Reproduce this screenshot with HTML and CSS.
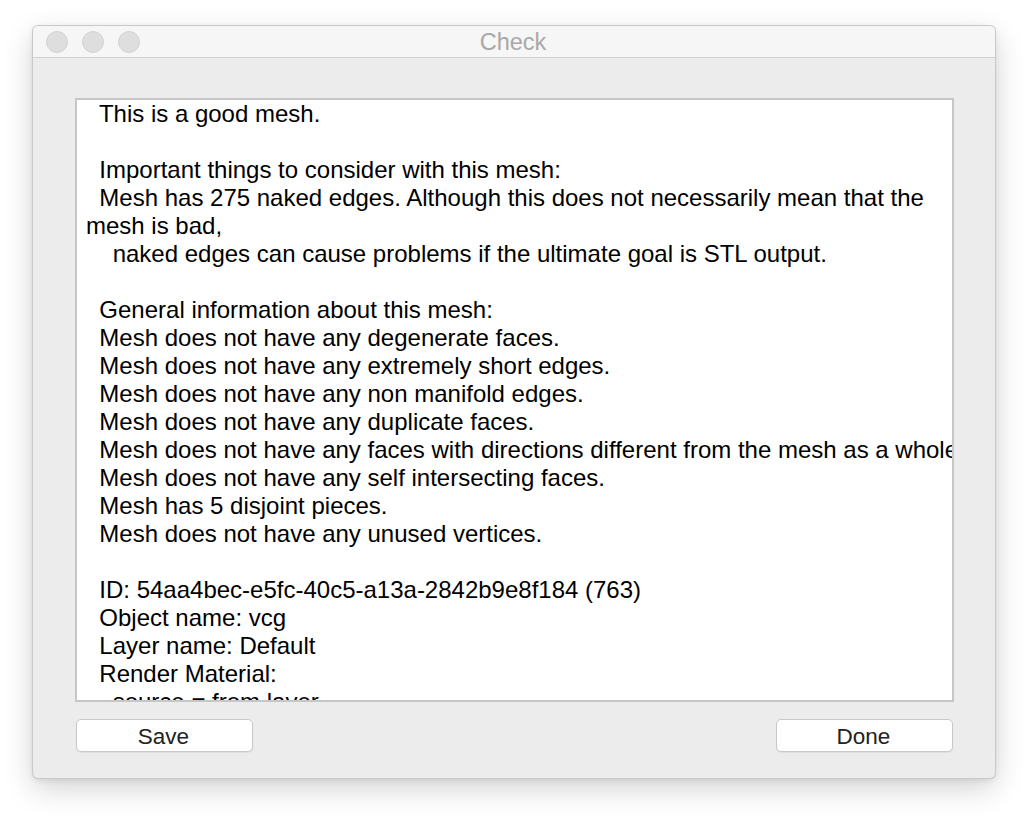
FILE: index.html
```html
<!DOCTYPE html>
<html>
<head>
<meta charset="utf-8">
<title>Check</title>
<link rel="stylesheet" href="styles.css">
</head>
<body>
<div class="stage">
  <div class="window">
    <div class="titlebar">
      <div class="lights">
        <span class="light"></span>
        <span class="light"></span>
        <span class="light"></span>
      </div>
      <div class="title">Check</div>
    </div>
    <div class="content">
      <div class="textbox">
<div class="text">  This is a good mesh.

  Important things to consider with this mesh:
  Mesh has 275 naked edges. Although this does not necessarily mean that the
mesh is bad,
    naked edges can cause problems if the ultimate goal is STL output.

  General information about this mesh:
  Mesh does not have any degenerate faces.
  Mesh does not have any extremely short edges.
  Mesh does not have any non manifold edges.
  Mesh does not have any duplicate faces.
  Mesh does not have any faces with directions different from the mesh as a whole.
  Mesh does not have any self intersecting faces.
  Mesh has 5 disjoint pieces.
  Mesh does not have any unused vertices.

  ID: 54aa4bec-e5fc-40c5-a13a-2842b9e8f184 (763)
  Object name: vcg
  Layer name: Default
  Render Material:
    source = from layer
    index = -1
</div>
      </div>
      <div class="buttons">
        <button class="btn">Save</button>
        <button class="btn">Done</button>
      </div>
    </div>
  </div>
</div>
</body>
</html>
```
FILE: styles.css
```css
html, body {
  margin: 0;
  padding: 0;
  background: #ffffff;
}
.stage {
  padding: 26px 0 42px 33px;
}
.window {
  width: 962px;
  height: 752px;
  box-sizing: border-box;
  background: #ececec;
  border-radius: 5px;
  box-shadow: 0 0 0 1px #c9c9c9, 0 10px 30px rgba(0,0,0,0.18), 0 2px 6px rgba(0,0,0,0.10);
  display: flex;
  flex-direction: column;
  overflow: hidden;
  font-family: "Liberation Sans", Arial, sans-serif;
}
.titlebar {
  height: 31px;
  flex: none;
  background: #f6f6f6;
  border-bottom: 1px solid #d1d1d1;
  display: flex;
  align-items: center;
  position: relative;
}
.lights {
  display: flex;
  gap: 14px;
  padding-left: 13px;
  padding-top: 1px;
}
.light {
  width: 20px;
  height: 20px;
  border-radius: 50%;
  background: #dedede;
  border: 1px solid #d2d2d2;
}
.title {
  position: absolute;
  left: 0;
  right: 0;
  top: 0;
  bottom: 0;
  display: flex;
  align-items: center;
  justify-content: center;
  color: #a8a8a8;
  font-size: 23.5px;
  padding-top: 1px;
  padding-right: 2px;
}
.content {
  flex: 1;
  display: flex;
  flex-direction: column;
  padding: 40px 41px 0 42px;
}
.textbox {
  width: 879px;
  height: 604px;
  box-sizing: border-box;
  background: #ffffff;
  border: 2px solid #c6c6c6;
  overflow: hidden;
  padding: 0 0 0 9px;
}
.text {
  white-space: pre;
  font-size: 24px;
  line-height: 28px;
  color: #000000;
}
.buttons {
  display: flex;
  justify-content: space-between;
  margin-top: 17px;
}
.btn {
  width: 177px;
  height: 33px;
  margin: 0 1px;
  background: #ffffff;
  border: 1px solid #c8c8c8;
  border-radius: 5px;
  box-shadow: 0 1px 1px rgba(0,0,0,0.06);
  font-family: "Liberation Sans", Arial, sans-serif;
  font-size: 22.5px;
  color: #222222;
  padding: 2px 2px 0 0;
}
```
